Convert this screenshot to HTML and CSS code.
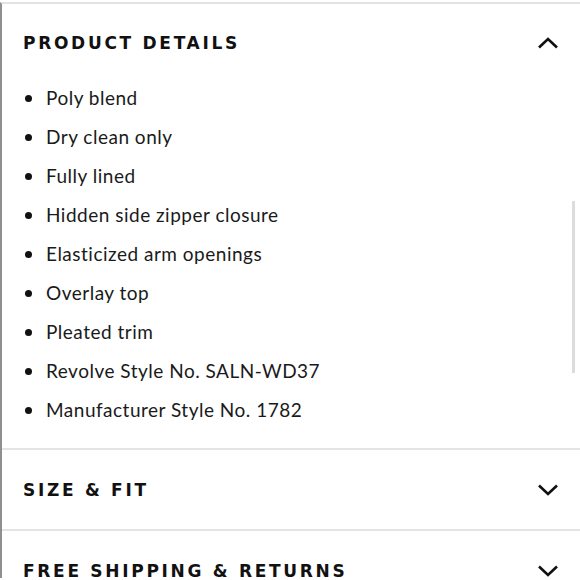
FILE: index.html
```html
<!DOCTYPE html>
<html>
<head>
<meta charset="utf-8">
<link rel="stylesheet" href="styles.css">
</head>
<body>
<div class="panel">
  <section class="section open">
    <div class="head">
      <h2 class="title">PRODUCT DETAILS</h2>
      <svg class="chev" width="22" height="12" viewBox="0 0 22 12"><path d="M2 10.5 L11 2 L20 10.5" fill="none" stroke="#111" stroke-width="2.6"/></svg>
    </div>
    <ul class="list">
      <li>Poly blend</li>
      <li>Dry clean only</li>
      <li>Fully lined</li>
      <li>Hidden side zipper closure</li>
      <li>Elasticized arm openings</li>
      <li>Overlay top</li>
      <li>Pleated trim</li>
      <li>Revolve Style No. SALN-WD37</li>
      <li>Manufacturer Style No. 1782</li>
    </ul>
  </section>
  <section class="section">
    <div class="head">
      <h2 class="title">SIZE &amp; FIT</h2>
      <svg class="chev" width="22" height="12" viewBox="0 0 22 12"><path d="M2 1.5 L11 10 L20 1.5" fill="none" stroke="#111" stroke-width="2.6"/></svg>
    </div>
  </section>
  <section class="section">
    <div class="head">
      <h2 class="title">FREE SHIPPING &amp; RETURNS</h2>
      <svg class="chev" width="22" height="12" viewBox="0 0 22 12"><path d="M2 1.5 L11 10 L20 1.5" fill="none" stroke="#111" stroke-width="2.6"/></svg>
    </div>
  </section>
  <div class="scrollbar"></div>
</div>
</body>
</html>
```

FILE: styles.css
```css
html, body {
  margin: 0;
  padding: 0;
  background: #fff;
}
body {
  width: 580px;
  height: 580px;
  overflow: hidden;
}
.panel {
  position: relative;
  margin-top: 2px;
  border-top: 2px solid #e2e2e2;
  border-left: 2px solid #8f8f8f;
  height: 576px;
  box-sizing: border-box;
  overflow: hidden;
}
.section {
  border-bottom: 2px solid #e4e4e4;
}
.head {
  display: flex;
  align-items: center;
  justify-content: space-between;
  padding: 0 21px 0 21px;
  height: 79px;
}
.open .head {
  height: 70px;
  padding-top: 4px;
}
.title {
  margin: 0;
  font-family: "DejaVu Sans", sans-serif;
  font-weight: 700;
  font-size: 17px;
  letter-spacing: 2.7px;
  color: #111;
}
.list {
  list-style: none;
  margin: 0;
  padding: 0 0 19px 0;
}
.list li {
  position: relative;
  height: 39px;
  display: flex;
  align-items: center;
  padding-left: 44px;
  font-family: "Lato", sans-serif;
  font-size: 19px;
  color: #1a1a1a;
  letter-spacing: 0.5px;
}
.list li::before {
  content: "";
  position: absolute;
  left: 23px;
  top: 50%;
  width: 7px;
  height: 7px;
  margin-top: -3px;
  border-radius: 50%;
  background: #111;
}
.scrollbar {
  position: absolute;
  left: 570px;
  top: 197px;
  width: 3px;
  height: 172px;
  background: #dcdcdc;
}
```
